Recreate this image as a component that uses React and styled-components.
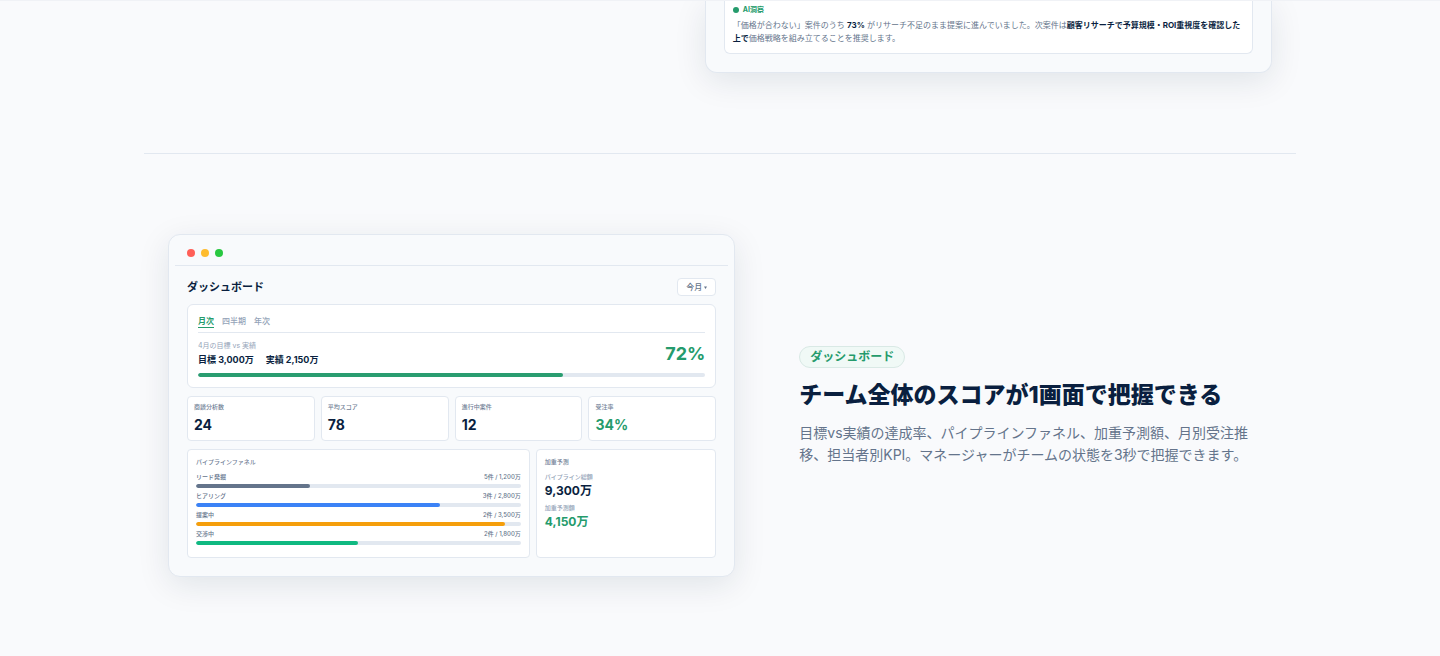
import React, { useState } from "react";
import styled, { createGlobalStyle } from "styled-components";

const GlobalStyle = createGlobalStyle`
  * {
    box-sizing: border-box;
  }

  body {
    margin: 0;
    background: #f9fafc;
    color: #0a1f3f;
    font-family: Inter, "Noto Sans CJK JP", sans-serif;
  }

  h2, h3, h4, p, dl, dt, dd, ul {
    margin: 0;
    padding: 0;
  }
`;

const Page = styled.main`
  max-width: 1200px;
  margin: 0 auto;
  padding: 0 24px;
`;

const NavEdge = styled.header`
  position: fixed;
  top: 0;
  left: 0;
  right: 0;
  border-top: 1px solid #f0f2f6;
`;

const FeatureRow = styled.section`
  display: grid;
  grid-template-columns: ${(props) =>
    props.$reverse ? "1fr 1.2fr" : "1.2fr 1fr"};
  column-gap: 64px;
  align-items: center;
  padding: ${(props) => (props.$first ? "0 24px 80px" : "80px 24px")};
  border-top: ${(props) => (props.$first ? "none" : "1px solid #e2e8f0")};
`;

const Window = styled.div`
  padding: ${(props) => (props.$cut ? "0 6px 6px" : "6px")};
  background: #f8fafc;
  border: 1px solid #e2e8f0;
  border-top-width: ${(props) => (props.$cut ? "0" : "1px")};
  border-radius: ${(props) => (props.$cut ? "0 0 12px 12px" : "12px")};
  box-shadow: 0 8px 32px rgba(10, 40, 60, 0.1);
`;

const WindowBar = styled.div`
  display: flex;
  align-items: center;
  gap: 6px;
  height: 25px;
  padding: 0 12px;
  border-bottom: 1px solid #e2e8f0;
`;

const Light = styled.span`
  width: 8px;
  height: 8px;
  border-radius: 50%;
  background: ${(props) => props.color};
`;

const WindowBody = styled.div`
  display: flex;
  flex-direction: column;
  gap: 8px;
  padding: ${(props) => (props.$cut ? "0 12px 12px" : "12px")};
`;

const Panel = styled.div`
  min-width: 0;
  padding: ${(props) => props.$pad || "8px"};
  background: #fff;
  border: 1px solid #e2e8f0;
  border-radius: ${(props) => props.$radius || "4px"};
`;

const InsightPanel = styled(Panel)`
  padding: 5px 8px 8px;
  border-top: none;
  border-radius: 0 0 6px 6px;
`;

const InsightTitle = styled.h4`
  display: flex;
  align-items: center;
  gap: 4px;
  margin-bottom: 4px;
  color: #259b6c;
  font-size: 7px;
  line-height: 10px;
`;

const InsightDot = styled.span`
  width: 6px;
  height: 6px;
  border-radius: 50%;
  background: #259b6c;
`;

const InsightText = styled.p`
  color: #64748b;
  font-size: 8px;
  line-height: 13px;

  strong {
    color: #0a1f3f;
  }
`;

const DashHeader = styled.div`
  display: flex;
  justify-content: space-between;
  align-items: center;
`;

const DashTitle = styled.h3`
  font-size: 11px;
  line-height: 18px;
`;

const Period = styled.label`
  display: flex;
  align-items: center;
  gap: 2px;
  height: 18px;
  padding: 0 8px;
  background: #fff;
  border: 1px solid #e2e8f0;
  border-radius: 4px;
  color: #64748b;
`;

const PeriodSelect = styled.select`
  appearance: none;
  padding: 0;
  border: none;
  background: none;
  color: inherit;
  font: 500 8px/12px Inter, "Noto Sans CJK JP", sans-serif;
`;

const Tabs = styled.div`
  display: flex;
  gap: 8px;
  margin-bottom: 8px;
  padding-bottom: 4px;
  border-bottom: 1px solid #e2e8f0;
`;

const Tab = styled.button`
  padding: 0;
  background: none;
  border: none;
  border-bottom: 1px solid
    ${(props) => (props.$active ? "#259b6c" : "transparent")};
  color: ${(props) => (props.$active ? "#259b6c" : "#94a3b8")};
  font-family: inherit;
  font-size: 8px;
  font-weight: ${(props) => (props.$active ? 700 : 500)};
  line-height: 12px;
  cursor: pointer;
`;

const Goal = styled.div`
  display: flex;
  justify-content: space-between;
  align-items: center;
  margin-bottom: 6px;
`;

const GoalLabel = styled.p`
  margin-bottom: 3px;
  color: #94a3b8;
  font-size: 7px;
  line-height: 9px;
`;

const GoalAmounts = styled.div`
  display: flex;
  gap: 12px;
  font-size: 9px;
  font-weight: 700;
  line-height: 14px;
`;

const GoalRate = styled.strong`
  color: #259b6c;
  font-size: 18px;
  font-weight: 700;
  line-height: 24px;
`;

const Track = styled.div`
  height: 4px;
  border-radius: 2px;
  background: #e2e8f0;
  overflow: hidden;
`;

const Fill = styled.div`
  height: 100%;
  border-radius: 2px;
  background: ${(props) => props.color};
`;

const Stats = styled.dl`
  display: grid;
  grid-template-columns: repeat(4, 1fr);
  gap: 6px;
`;

const SmallLabel = styled.dt`
  color: ${(props) => (props.$light ? "#94a3b8" : "#718096")};
  font-size: 6px;
  font-weight: 500;
  line-height: 8px;
`;

const StatValue = styled.dd`
  margin-top: 5px;
  color: ${(props) => (props.$accent ? "#259b6c" : "#0a1f3f")};
  font-size: 14px;
  font-weight: 700;
  line-height: 18px;
`;

const Details = styled.div`
  display: grid;
  grid-template-columns: 1.9fr 1fr;
  gap: 6px;
`;

const PanelTitle = styled.h4`
  margin-bottom: 7px;
  color: #718096;
  font-size: 6px;
  font-weight: 500;
  line-height: 8px;
`;

const Stage = styled.li`
  margin-bottom: 4px;
  list-style: none;
`;

const StageText = styled.div`
  display: flex;
  justify-content: space-between;
  margin-bottom: 3px;
  color: #64748b;
  font-size: 6px;
  font-weight: 500;
  line-height: 8px;
`;

const ForecastValue = styled.dd`
  margin: 3px 0 6px;
  color: ${(props) => (props.$accent ? "#259b6c" : "#0a1f3f")};
  font-size: 12px;
  font-weight: 700;
  line-height: 14px;
`;

const Badge = styled.span`
  display: inline-block;
  padding: 0 10px;
  background: #f0f9f6;
  border: 1px solid #d9e9e5;
  border-radius: 11px;
  color: #259b6c;
  font-size: 12px;
  font-weight: 700;
  line-height: 20px;
`;

const Copy = styled.div`
  display: flex;
  flex-direction: column;
  align-items: flex-start;
`;

const Heading = styled.h2`
  margin: 12px 0;
  font-size: 23px;
  font-weight: 800;
  line-height: 30px;
`;

const Lead = styled.p`
  color: #64748b;
  font-size: 14px;
  line-height: 22px;
`;

const tabs = ["月次", "四半期", "年次"];

const stats = [
  { label: "商談分析数", value: "24" },
  { label: "平均スコア", value: "78" },
  { label: "進行中案件", value: "12" },
  { label: "受注率", value: "34%", accent: true },
];

const stages = [
  { name: "リード発掘", total: "5件 / 1,200万", rate: 35, color: "#64748b" },
  { name: "ヒアリング", total: "3件 / 2,800万", rate: 75, color: "#3b82f6" },
  { name: "提案中", total: "2件 / 3,500万", rate: 95, color: "#f59e0b" },
  { name: "交渉中", total: "2件 / 1,800万", rate: 50, color: "#10b981" },
];

const Dashboard = () => {
  const [activeTab, setActiveTab] = useState("月次");

  return (
    <Window>
      <WindowBar>
        <Light color="#ff5f57" />
        <Light color="#febc2e" />
        <Light color="#28c840" />
      </WindowBar>
      <WindowBody>
        <DashHeader>
          <DashTitle>ダッシュボード</DashTitle>
          <Period>
            <PeriodSelect aria-label="期間">
              <option>今月</option>
            </PeriodSelect>
            <svg width="3" height="3" viewBox="0 0 3 3" aria-hidden="true">
              <path d="M0 0.5h3L1.5 3z" fill="currentColor" />
            </svg>
          </Period>
        </DashHeader>
        <Panel $pad="10px" $radius="6px">
          <Tabs>
            {tabs.map((tab) => (
              <Tab
                key={tab}
                type="button"
                $active={tab === activeTab}
                onClick={() => setActiveTab(tab)}
              >
                {tab}
              </Tab>
            ))}
          </Tabs>
          <Goal>
            <div>
              <GoalLabel>4月の目標 vs 実績</GoalLabel>
              <GoalAmounts>
                <span>目標 3,000万</span>
                <span>実績 2,150万</span>
              </GoalAmounts>
            </div>
            <GoalRate>72%</GoalRate>
          </Goal>
          <Track>
            <Fill color="#2a9d70" style={{ width: "72%" }} />
          </Track>
        </Panel>
        <Stats>
          {stats.map((stat) => (
            <Panel key={stat.label} $pad="6px">
              <SmallLabel>{stat.label}</SmallLabel>
              <StatValue $accent={stat.accent}>{stat.value}</StatValue>
            </Panel>
          ))}
        </Stats>
        <Details>
          <Panel>
            <PanelTitle>パイプラインファネル</PanelTitle>
            <ul>
              {stages.map((stage) => (
                <Stage key={stage.name}>
                  <StageText>
                    <span>{stage.name}</span>
                    <span>{stage.total}</span>
                  </StageText>
                  <Track>
                    <Fill
                      color={stage.color}
                      style={{ width: `${stage.rate}%` }}
                    />
                  </Track>
                </Stage>
              ))}
            </ul>
          </Panel>
          <Panel>
            <PanelTitle>加重予測</PanelTitle>
            <dl>
              <SmallLabel $light>パイプライン総額</SmallLabel>
              <ForecastValue>9,300万</ForecastValue>
              <SmallLabel $light>加重予測額</SmallLabel>
              <ForecastValue $accent>4,150万</ForecastValue>
            </dl>
          </Panel>
        </Details>
      </WindowBody>
    </Window>
  );
};

const App = () => (
  <>
    <GlobalStyle />
    <NavEdge />
    <Page lang="ja">
      <FeatureRow $first $reverse>
        <div />
        <Window $cut>
          <WindowBody $cut>
            <InsightPanel>
              <InsightTitle>
                <InsightDot />
                AI洞察
              </InsightTitle>
              <InsightText>
                「価格が合わない」案件のうち <strong>73%</strong>{" "}
                がリサーチ不足のまま提案に進んでいました。次案件は
                <strong>顧客リサーチで予算規模・ROI重視度を確認した上で</strong>
                価格戦略を組み立てることを推奨します。
              </InsightText>
            </InsightPanel>
          </WindowBody>
        </Window>
      </FeatureRow>
      <FeatureRow>
        <Dashboard />
        <Copy>
          <Badge>ダッシュボード</Badge>
          <Heading>チーム全体のスコアが1画面で把握できる</Heading>
          <Lead>
            目標vs実績の達成率、パイプラインファネル、加重予測額、月別受注推移、担当者別KPI。マネージャーがチームの状態を3秒で把握できます。
          </Lead>
        </Copy>
      </FeatureRow>
    </Page>
  </>
);

export default App;
